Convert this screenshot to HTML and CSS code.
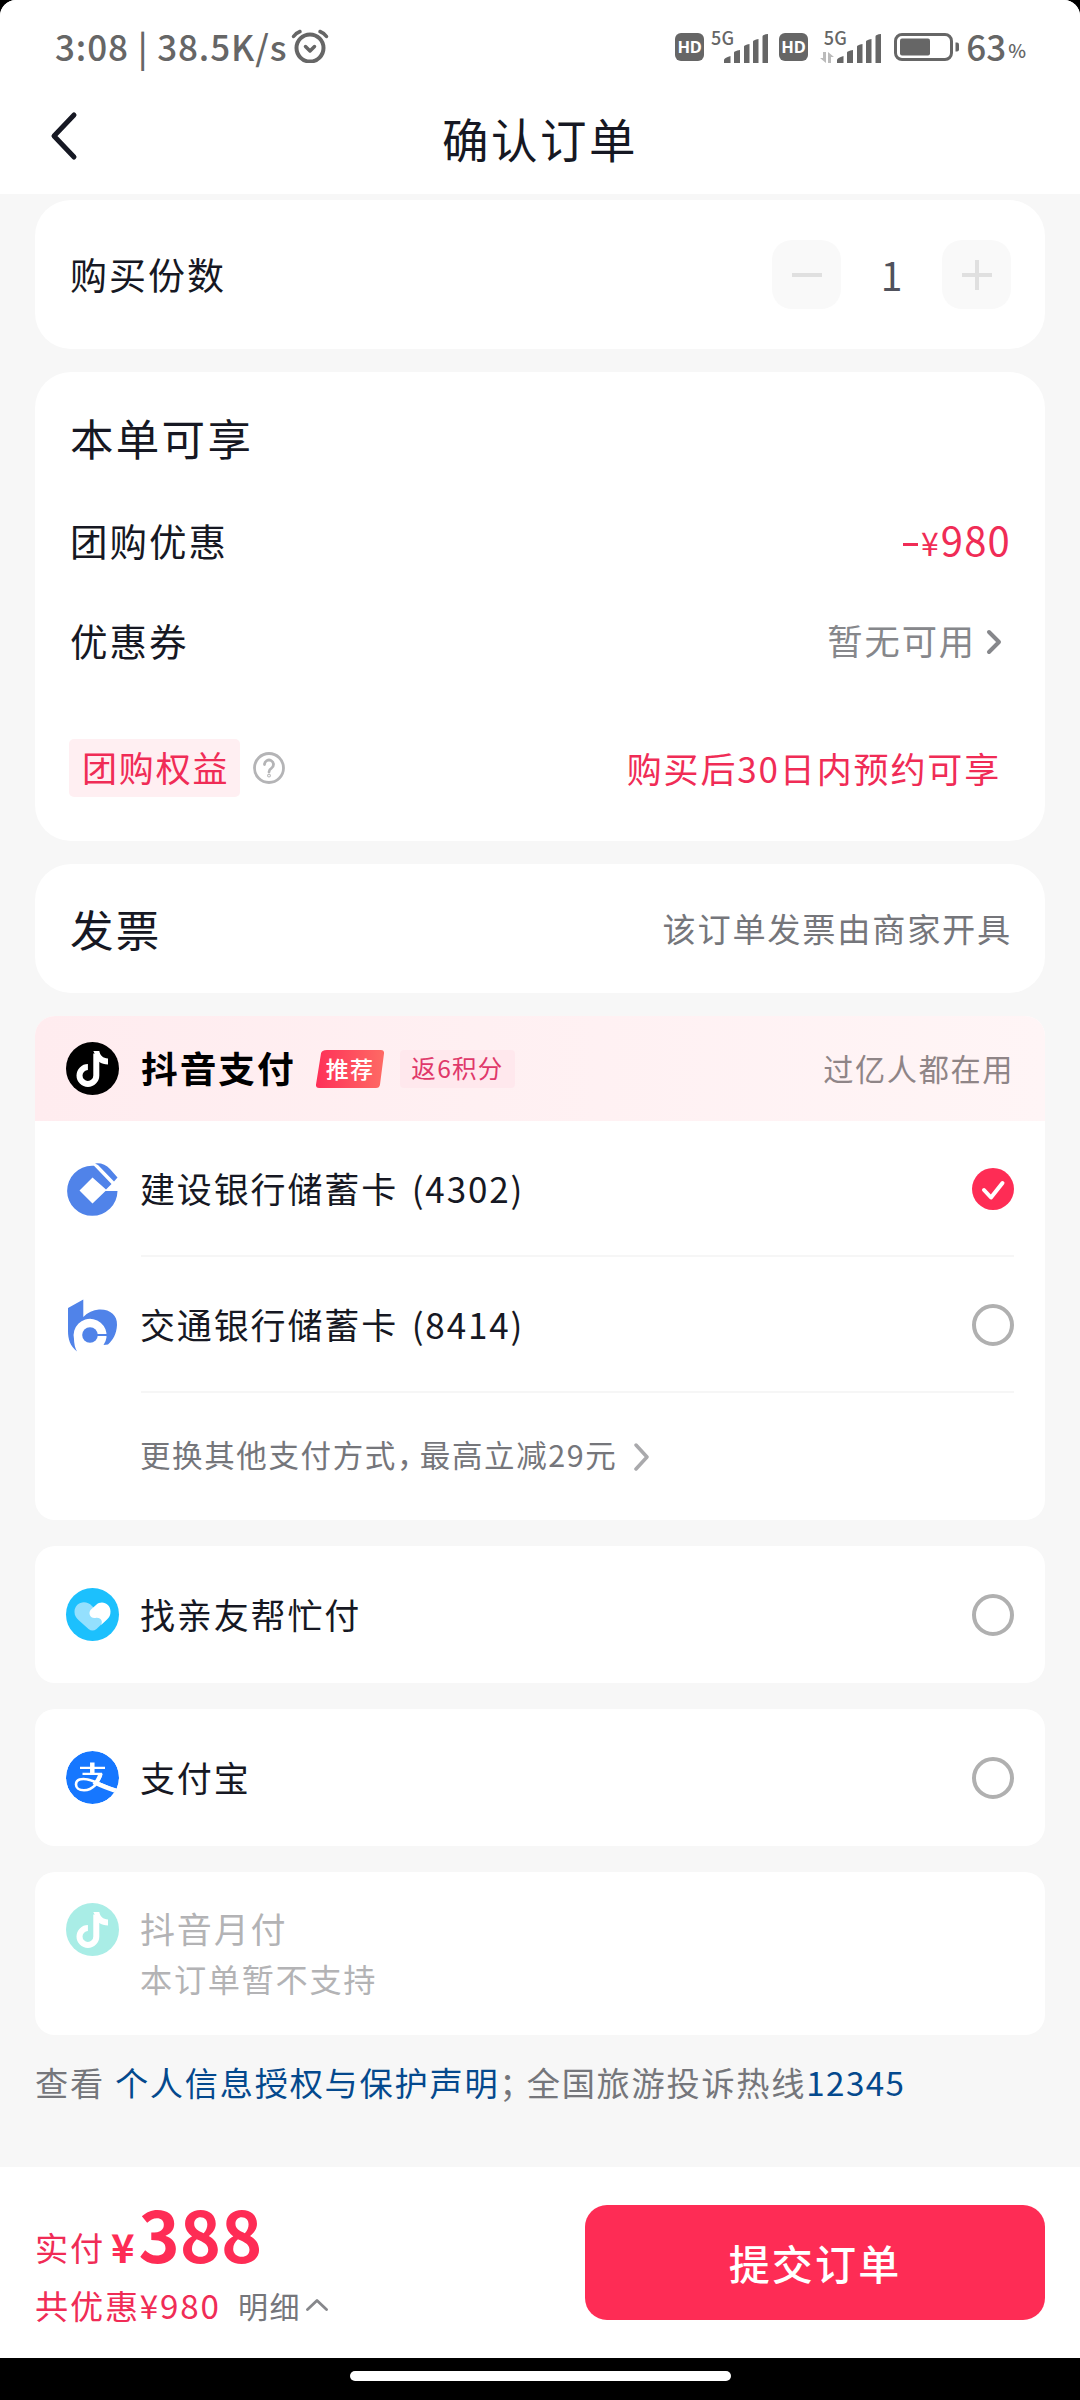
FILE: index.html
```html
<!DOCTYPE html>
<html lang="zh-CN">
<head>
<meta charset="utf-8">
<title>确认订单</title>
<link rel="stylesheet" href="styles.css">
</head>
<body>
<svg class="defs" width="0" height="0" aria-hidden="true">
  <defs>
    <symbol id="note" viewBox="0 0 53 53">
      <circle cx="26.5" cy="26.5" r="26.5" fill="currentColor"/>
      <path d="M30.3 11.5V33.500a8.400 8.400 0 1 1-8.400-8.400" fill="none" stroke="#fff" stroke-width="6"/>
      <path d="M27.300 9H33.300C34 13.200 37 16.200 42 16.600V22.600C38.500 22.600 35.600 21.600 33 19.800z" fill="#fff"/>
    </symbol>
    <symbol id="bars" viewBox="0 0 44 29">
      <path d="M0 29v-3q0-2 6.500-4v7zM10 29V18.500q0-1.500 6-2.500v13zM20 29V12.500q0-1.500 5.500-2.500v19zM29 29V7.500Q29 6 34.500 5v24zM38.500 29V2.500Q38.500.5 44 0v29z" fill="#666"/>
    </symbol>
  </defs>
</svg>
<div class="screen">
  <div class="status">
    <span class="clock">3:08 | 38.5K/s</span>
    <svg class="alarm" width="38" height="34" viewBox="0 0 38 34" fill="none" stroke="#666" stroke-width="4" stroke-linecap="round" stroke-linejoin="round"><circle cx="19" cy="19" r="13.500"/><path d="M14.500 17.500l4.500 4.500 4.500-4.500" stroke-width="3.500"/><path d="M2.500 7.500Q5 4 9 2.500M35.500 7.500Q33 4 29 2.500" stroke-width="3.500"/></svg>
    <span class="hd">HD</span>
    <span class="net net-a"><b class="gen">5G</b><svg class="sig" width="44" height="29"><use href="#bars"/></svg></span>
    <span class="hd hd-b">HD</span>
    <span class="net net-b"><b class="gen">5G</b><svg class="updown" width="14" height="11" viewBox="0 0 14 11" fill="#bbb"><path d="M3 0h3v11L0 6h3zM8 11V0l6 5h-3v6z"/></svg><svg class="sig" width="44" height="29"><use href="#bars"/></svg></span>
    <svg class="battery" width="66" height="28" viewBox="0 0 66 28"><rect x="1.500" y="1.500" width="56" height="25" rx="6.500" fill="none" stroke="#666" stroke-width="3"/><rect x="6" y="5.500" width="30" height="17" rx="2" fill="#666"/><path d="M61.500 9.500h1.500q2 0 2 2v5q0 2-2 2h-1.500z" fill="#666"/></svg>
    <span class="level">63</span><span class="pct">%</span>
  </div>
  <header class="nav">
    <svg class="back" width="28" height="50" viewBox="0 0 28 50" fill="none" stroke="#161823" stroke-width="5" stroke-linecap="round" stroke-linejoin="round"><path d="M24 4L4 25l20 21"/></svg>
    <h1 class="title">确认订单</h1>
  </header>

  <main class="content">
    <section class="card quantity">
      <span class="label">购买份数</span>
      <div class="stepper">
        <span class="step"><svg width="30" height="30" viewBox="0 0 30 30"><path d="M0 15h30" stroke="#e0e0e0" stroke-width="4"/></svg></span>
        <span class="count">1</span>
        <span class="step"><svg width="30" height="30" viewBox="0 0 30 30"><path d="M0 15h30M15 0v30" stroke="#e0e0e0" stroke-width="4"/></svg></span>
      </div>
    </section>

    <section class="card offers">
      <h2 class="heading">本单可享</h2>
      <div class="row deal"><span class="label wide">团购优惠</span><span class="minus"><i class="dash"></i><small>¥</small>980</span></div>
      <div class="row coupon"><span class="label wide">优惠券</span><span class="none">暂无可用</span><svg class="more" width="16" height="26" viewBox="0 0 16 26" fill="none" stroke="#86878b" stroke-width="4" stroke-linecap="round" stroke-linejoin="round"><path d="M3 3l10 10L3 23"/></svg></div>
      <div class="row rights">
        <span class="tag">团购权益</span>
        <svg class="help" width="32" height="32" viewBox="0 0 32 32" fill="none" stroke="#b4b4b6" stroke-width="2.800" stroke-linecap="round"><circle cx="16" cy="16" r="14.500"/><path d="M11.500 12.500a4.500 4.500 0 1 1 6.800 3.900Q16 17.700 16 20"/><circle cx="16" cy="23.600" r=".5"/></svg>
        <span class="promise">购买后30日内预约可享</span>
      </div>
    </section>

    <section class="card invoice">
      <h2 class="heading">发票</h2>
      <span class="issuer">该订单发票由商家开具</span>
    </section>

    <section class="card pay">
      <div class="pay-head">
        <svg class="icon" width="53" height="53"><use href="#note"/></svg>
        <span class="brand">抖音支付</span>
        <span class="rec"><svg class="rec-bg" width="68" height="38" viewBox="0 0 68 38"><defs><linearGradient id="g" x1="0" x2="1" y1="0" y2="0"><stop stop-color="#fe3058"/><stop offset="1" stop-color="#fe6a64"/></linearGradient></defs><path d="M11 0h54q3.500 0 3 3.500l-4 31Q63.500 38 60 38H3Q-.5 38 0 34.500l5-31Q5.500 0 11 0z" fill="url(#g)"/></svg><span class="rec-text">推荐</span></span>
        <span class="points">返6积分</span>
        <span class="users">过亿人都在用</span>
      </div>
      <div class="method">
        <svg class="icon" width="53" height="53" viewBox="0 0 53 53" fill="#5083e9"><path fill-rule="evenodd" d="M26 2.800H28L45.500 21 40 26.500 26.500 14.500 13.500 27.500 26.500 40.500 39.500 28H51.500A25.200 25 0 1 1 26 2.800z"/><path d="M29 .5Q38-.5 44 6L51.500 14.500 48 18.500 32 2z"/></svg>
        <span class="bank">建设银行储蓄卡 (4302)</span>
        <svg class="radio" width="42" height="42" viewBox="0 0 42 42"><circle cx="21" cy="21" r="21" fill="#fe2c55"/><path d="M12 22l7 7.500L30.500 15" fill="none" stroke="#fff" stroke-width="4" stroke-linecap="round" stroke-linejoin="round"/></svg>
      </div>
      <div class="method">
        <svg class="icon" width="53" height="53" viewBox="0 0 53 53" fill="#5083e9"><path d="M2 9L17.300.5V18Q24 11 33 10.500C44 10 51.500 16 51 26 50.500 35 47 41 42 45.500L37.500 46A16.500 16.500 0 1 0 8 40Q8 47 11 52.500C4 47 2 40 2 32z"/><circle cx="24" cy="36" r="7.800"/><path d="M30 35h12v2H30z"/></svg>
        <span class="bank">交通银行储蓄卡 (8414)</span>
        <i class="radio off"></i>
      </div>
      <div class="other"><span class="other-text">更换其他支付方式<span class="comma">，</span>最高立减29元</span><svg width="16" height="28" viewBox="0 0 16 28" fill="none" stroke="#a9a9ac" stroke-width="3.500" stroke-linecap="round" stroke-linejoin="round"><path d="M2 2l11 12L2 26"/></svg></div>
    </section>

    <section class="card option">
      <svg class="icon" width="53" height="53" viewBox="0 0 53 53"><circle cx="26.500" cy="26.500" r="26.500" fill="#1cc0fd"/><path d="M26 18C20 11 8.500 14 8.500 24c0 4 2 6 4.500 8.500l9.500 8.500q4 3 8 0l9.500-9z" fill="#94e0fe"/><path d="M44.500 23.500C44.500 16 36 11.500 30 17l-5 4.500c-3.500 3.500-.5 9.500 4.500 8.500 3-.5 5 .5 6 2.500.8 1.500.2 3-.5 4.500l6-5.500c2.500-2.500 3.500-4.500 3.500-8z" fill="#fff"/></svg>
      <span class="bank">找亲友帮忙付</span>
      <i class="radio off"></i>
    </section>

    <section class="card option">
      <svg class="icon" width="53" height="53" viewBox="0 0 53 53"><defs><clipPath id="c"><circle cx="26.500" cy="26.500" r="26.500"/></clipPath></defs><g clip-path="url(#c)"><circle cx="26.500" cy="26.500" r="26.500" fill="#1677ff"/><g fill="none" stroke="#fff"><path d="M14 16.800h25M16.500 22.800H36" stroke-width="2.200"/><path d="M26.300 11.500v11" stroke-width="4.500"/><path d="M35.500 22.500C33 31 27 39.300 18 39.300 12.500 39.300 10 36.500 10 33.500c0-3.500 3-5.500 7.500-5.500C27 28 36 35 51 39.500" stroke-width="2.600"/><path d="M34.500 23C33 27.500 31 31 28 34" stroke-width="4"/><path d="M29 31.500Q38 36 52 40.500" stroke-width="4.600"/></g></g></svg>
      <span class="bank">支付宝</span>
      <i class="radio off"></i>
    </section>

    <section class="card monthly">
      <svg class="icon mint" width="53" height="53"><use href="#note"/></svg>
      <div class="monthly-text"><span class="m-name">抖音月付</span><span class="m-sub">本订单暂不支持</span></div>
    </section>

    <p class="terms"><span class="see">查看</span><a class="link">个人信息授权与保护声明</a><span class="semi">；</span>全国旅游投诉热线<a class="link phone">12345</a></p>
  </main>

  <footer class="checkout">
    <div class="sum">
      <div class="total"><span class="t-label">实付</span><span class="t-sign">¥</span><span class="t-num">388</span></div>
      <div class="saved"><span class="s-text">共优惠¥980</span><span class="detail">明细</span><svg width="22" height="12" viewBox="0 0 22 12" fill="none" stroke="#86878b" stroke-width="2.800" stroke-linecap="round" stroke-linejoin="round"><path d="M1.500 10.500L11 1.500l9.500 9"/></svg></div>
    </div>
    <button class="submit">提交订单</button>
  </footer>
</div>
<div class="gesture"><i class="handle"></i></div>
</body>
</html>
```
FILE: styles.css
```css
* { box-sizing: border-box; margin: 0; padding: 0; letter-spacing: .053em; }
body {
  width: 1080px; height: 2400px; overflow: hidden; background: #000; color: #161823;
  font-family: "Noto Sans CJK SC", "Noto Sans", sans-serif;
  line-height: 1; white-space: nowrap;
}
i, b { font-style: normal; font-weight: 400; }
svg { display: block; flex: none; }
.defs { position: absolute; }
.screen { height: 2358px; display: flex; flex-direction: column; background: #f7f7f7; border-radius: 16px 16px 0 0; overflow: hidden; }

/* status bar */
.status { height: 94px; padding: 0 54px 0 55px; display: flex; align-items: center; background: #fff; color: #666; }
.clock { width: 238px; margin-top: -4px; font-size: 35px; letter-spacing: .9px; font-weight: 500; }
.alarm { margin-top: -2px; }
.hd { width: 29px; height: 28px; margin-left: 346px; border-radius: 6px; background: #666; color: #fff; font: 700 16.500px/28px "Noto Sans", sans-serif; letter-spacing: -.3px; text-align: center; }
.hd-b { margin-left: 11px; }
.net { position: relative; height: 32px; display: flex; align-items: flex-end; }
.net-a { width: 57px; margin-left: 7px; padding-left: 13px; }
.net-b { width: 73px; margin-left: 12px; }
.gen { position: absolute; left: 0; top: -3px; font-size: 18px; line-height: 18px; letter-spacing: .3px; font-weight: 500; }
.net-b .gen { left: 4px; }
.net-b .sig { margin-left: 3px; }
.battery { margin-left: 2px; }
.level { margin: -4px 0 0 6px; font-size: 35px; letter-spacing: 0; font-weight: 500; }
.pct { margin: 4px 0 0 2px; font-size: 19px; letter-spacing: 0; font-weight: 500; }

/* title bar */
.nav { height: 100px; padding: 0 50px; display: grid; grid-template-columns: 120px 1fr 120px; align-items: center; background: #fff; }
.back { margin-top: -16px; }
.title { margin-top: -12px; text-align: center; font-size: 46.500px; font-weight: 400; }

.content { flex: 1; padding: 6px 35px 0; }
.card { background: #fff; border-radius: 36px; }
.label { font-size: 37px; }
.wide { font-size: 37.500px; }
.heading { font-size: 43.500px; font-weight: 400; }

.quantity { height: 149px; padding: 0 34px 0 35px; display: flex; align-items: center; justify-content: space-between; }
.stepper { display: flex; align-items: center; }
.step { width: 69px; height: 69px; display: grid; place-items: center; background: #f9f9f9; border-radius: 20px; }
.count { width: 101px; text-align: center; font-size: 39px; color: #50525c; letter-spacing: 0; }

.offers { height: 469px; margin-top: 23px; padding: 43px 35px 0; }
.offers .heading { line-height: 46px; }
.row { display: flex; align-items: center; }
.deal { height: 100px; margin-top: 29px; justify-content: space-between; }
.minus { display: flex; align-items: baseline; color: #f02c56; font-size: 40px; letter-spacing: 1.200px; margin: -2px -1px 0 0; }
.minus small { font-size: 32px; letter-spacing: 2px; }
.dash { width: 15px; height: 3px; margin: 0 3px 0 0; background: #f02c56; transform: translateY(-10px); }
.coupon { height: 100px; }
.none { margin-left: auto; font-size: 35.300px; color: #86878b; }
.more { margin: 3px 8px 0 10px; }
.rights { height: 58px; margin-top: 49px; }
.tag { width: 171px; height: 58px; margin-left: -1px; padding-left: 13px; background: #ffeff2; border-radius: 5px; color: #f02c56; font-size: 35px; line-height: 56px; }
.help { margin-left: 13px; }
.promise { margin: -2px 0 0 auto; padding-right: 9px; color: #f02c56; font-size: 35px; }

.invoice { height: 129px; margin-top: 23px; padding: 0 33px 0 35px; display: flex; align-items: center; justify-content: space-between; }
.issuer { font-size: 33.200px; color: #75767b; margin-top: -1px; }

/* payment methods */
.pay { height: 504px; margin-top: 23px; border-radius: 20px; overflow: hidden; }
.pay-head { height: 105px; padding: 0 31px; display: flex; align-items: center; background: linear-gradient(90deg, #ffecef, #fff5f6); color: #000; }
.icon { overflow: visible; }
.brand { margin: -2px 0 0 22px; width: 174px; font-size: 36.700px; font-weight: 700; }
.rec { position: relative; width: 68px; height: 38px; margin-left: 1px; display: grid; place-items: center; }
.rec-bg { position: absolute; inset: 0; }
.rec-text { position: relative; color: #fff; font-size: 23px; font-weight: 500; }
.points { width: 115px; height: 38px; margin-left: 16px; text-align: center; line-height: 36px; font-size: 24.500px; color: #e0386a; background: #ffe8ed; border-radius: 4px; }
.users { margin-left: auto; font-size: 30.200px; color: #8f8587; }
.method { margin: 0 31px; display: flex; align-items: center; position: relative; height: 136px; }
.method::after { content: ""; position: absolute; left: 75px; right: 0; bottom: 0; height: 2px; background: #f6f6f6; }
.bank { margin: -3px 0 0 21px; font-size: 35px; word-spacing: 4px; }
.radio { width: 42px; height: 42px; margin-left: auto; }
.off { border: 4px solid #b0b0b0; border-radius: 50%; }
.other { height: 127px; padding-left: 105px; display: flex; align-items: center; gap: 17px; color: #75767b; font-size: 30.500px; }
.other-text { margin-top: -4px; }
.comma { margin-right: 6px; font-feature-settings: "halt"; }

.option { height: 137px; margin-top: 26px; padding: 0 31px; display: flex; align-items: center; border-radius: 20px; }
.monthly { height: 163px; margin-top: 26px; padding: 31px; display: flex; border-radius: 20px; color: #b3b3b5; }
.mint { color: #a9ede6; }
.monthly-text { margin-left: 21px; display: flex; flex-direction: column; }
.m-name { font-size: 35px; line-height: 50px; }
.m-sub { font-size: 32.200px; line-height: 50px; }

.terms { margin: 22px 0 0; line-height: 50px; font-size: 33.200px; color: #75767b; }
.see { margin-right: 10px; }
.semi { margin-right: 9px; font-feature-settings: "halt"; }
.link { color: #04498d; }
.phone { letter-spacing: 1.400px; }

/* checkout bar */
.checkout { height: 191px; padding: 38px 35px; display: flex; justify-content: space-between; background: #fff; }
.sum { color: #fe2c55; }
.total { height: 70px; margin: -7px 0 7px; display: flex; align-items: baseline; line-height: 70px; }
.t-label { font-size: 33.200px; color: #f02c56; transform: translateY(-2px); }
.t-sign { font-size: 40px; font-weight: 700; letter-spacing: 0; margin-left: 6px; }
.t-num { font-size: 70px; font-weight: 700; letter-spacing: 0; margin-left: 4px; }
.saved { height: 60px; display: flex; align-items: center; }
.s-text { width: 203px; font-size: 33.200px; color: #f02c56; }
.detail { width: 68px; font-size: 30px; color: #75767b; }
.submit { width: 460px; height: 115px; border: 0; border-radius: 22px; background: #fe2c55; color: #fff; font: inherit; font-size: 41px; font-weight: 500; line-height: 115px; }

.gesture { height: 42px; padding-top: 13px; }
.handle { display: block; width: 381px; height: 10px; margin: 0 auto; border-radius: 5px; background: #fff; }
```
